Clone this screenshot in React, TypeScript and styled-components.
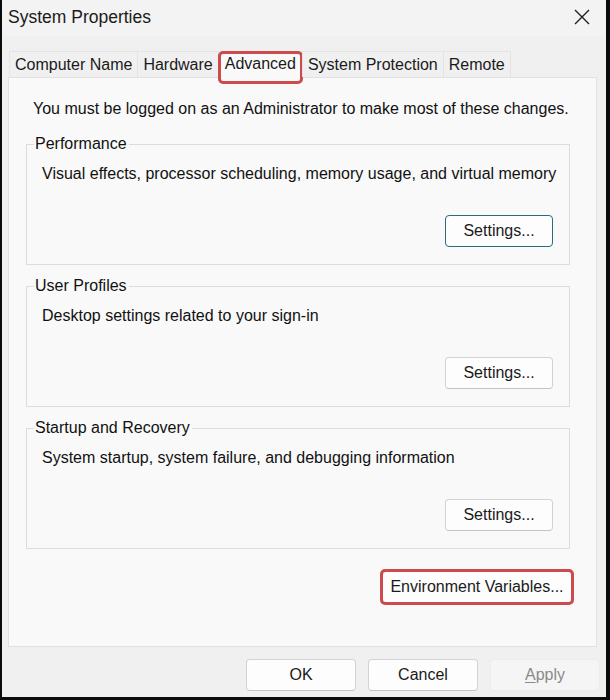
import React from "react";
import styled, { createGlobalStyle } from "styled-components";

const GlobalStyle = createGlobalStyle`
  html, body { margin: 0; padding: 0; background: #0b0b0b; }
  body { font-family: "Liberation Sans", Arial, sans-serif; color: #1a1a1a; }
  * { box-sizing: border-box; }
`;

const Frame = styled.div`
  width: 610px;
  height: 700px;
  padding: 0 4px 3px 2px;
  background: #0b0b0b;
`;

const Window = styled.div`
  width: 100%;
  height: 100%;
  background: #f0f0f0;
  display: flex;
  flex-direction: column;
`;

const TitleBar = styled.div`
  height: 36px;
  display: flex;
  align-items: center;
  justify-content: space-between;
  padding: 0 14px 0 6px;
  background: #f3f3f3;
`;

const Title = styled.div`
  font-size: 17.5px;
  color: #1b1b1b;
  margin-top: -2px;
`;

const CloseButton = styled.div`
  width: 20px;
  height: 20px;
  display: flex;
  align-items: center;
  justify-content: center;
  margin-top: -3px;
`;

const Body = styled.div`
  flex: 1;
  display: flex;
  flex-direction: column;
  padding: 15px 9px 0 6px;
`;

const TabStrip = styled.div`
  display: flex;
  align-items: flex-end;
  height: 26px;
  padding-left: 1px;
  position: relative;
  z-index: 1;
`;

const Tab = styled.div<{ $active?: boolean }>`
  height: 26px;
  display: flex;
  align-items: center;
  padding: 0 ${(p) => (p.$active ? "6px" : "5px")} ${(p) => (p.$active ? "3px" : "0")};
  font-size: 16px;
  color: #1a1a1a;
  background: ${(p) => (p.$active ? "#f9f9f9" : "#f0f0f0")};
  border: 1px solid #e3e3e3;
  border-bottom: ${(p) => (p.$active ? "1px solid #f9f9f9" : "none")};
  margin-right: -1px;
  margin-bottom: ${(p) => (p.$active ? "-1px" : "0")};
  position: relative;
`;

const Highlight = styled.div<{ $inset?: string }>`
  position: absolute;
  inset: ${(p) => p.$inset ?? "-3px"};
  border: 3px solid #cd4a4d;
  border-radius: 5px;
  pointer-events: none;
`;

const Panel = styled.div`
  height: 570px;
  background: #f9f9f9;
  border: 1px solid #e1e1e1;
  display: flex;
  flex-direction: column;
  padding: 21px 24px 0 17px;
`;

const Notice = styled.div`
  font-size: 16px;
  padding-left: 7px;
  line-height: 20px;
  color: #111;
`;

const GroupList = styled.div`
  display: flex;
  flex-direction: column;
  gap: 12px;
  margin-top: 16px;
  margin-right: 2px;
`;

const Group = styled.fieldset`
  margin: 0;
  min-width: 0;
  height: 130px;
  border: 1px solid #dcdcdc;
  border-radius: 0;
  padding: 0 16px 0 15px;
`;

const Legend = styled.legend`
  font-size: 16px;
  padding: 0 2px 0 1px;
  margin-left: -8px;
  line-height: 18px;
  color: #111;
`;

const Description = styled.div`
  font-size: 16px;
  line-height: 20px;
  margin-top: 11px;
  white-space: nowrap;
  color: #111;
`;

const GroupActions = styled.div`
  margin-top: 31px;
  display: flex;
  justify-content: flex-end;
`;

const Button = styled.button<{ $default?: boolean; $disabled?: boolean; $w?: number }>`
  font-family: "Liberation Sans", Arial, sans-serif;
  font-size: 16px;
  width: ${(p) => p.$w ?? 108}px;
  height: 32px;
  background: ${(p) => (p.$disabled ? "#f5f5f5" : "#fdfdfd")};
  color: ${(p) => (p.$disabled ? "#8a8a8a" : "#1a1a1a")};
  border: 1px solid ${(p) => (p.$default ? "#2a6b80" : p.$disabled ? "#ececec" : "#d3d3d3")};
  border-bottom-color: ${(p) => (p.$default ? "#2a6b80" : p.$disabled ? "#ececec" : "#c4c4c4")};
  border-radius: 4px;
  padding: 0;
  display: flex;
  align-items: center;
  justify-content: center;
  position: relative;
`;

const Underline = styled.span`
  text-decoration: underline;
  text-underline-offset: 2px;
`;

const EnvRow = styled.div`
  display: flex;
  justify-content: flex-end;
  margin-top: 22px;
`;

const Footer = styled.div`
  flex: 1;
  display: flex;
  justify-content: flex-end;
  align-items: flex-start;
  gap: 12px;
  padding: 12px 0 0 0;
  margin-right: -3px;
`;

const CloseIcon = () => (
  <svg width="18" height="18" viewBox="0 0 18 18">
    <path d="M2 2 L16 16 M16 2 L2 16" stroke="#1f1f1f" strokeWidth="1.4" fill="none" />
  </svg>
);

const groups = [
  { title: "Performance", text: "Visual effects, processor scheduling, memory usage, and virtual memory", def: true },
  { title: "User Profiles", text: "Desktop settings related to your sign-in" },
  { title: "Startup and Recovery", text: "System startup, system failure, and debugging information" },
];

export default function App() {
  return (
    <>
      <GlobalStyle />
      <Frame>
        <Window>
          <TitleBar>
            <Title>System Properties</Title>
            <CloseButton>
              <CloseIcon />
            </CloseButton>
          </TitleBar>
          <Body>
            <TabStrip>
              <Tab>Computer Name</Tab>
              <Tab>Hardware</Tab>
              <Tab $active>
                Advanced
                <Highlight $inset="-2px -1px -7px -1px" />
              </Tab>
              <Tab>System Protection</Tab>
              <Tab>Remote</Tab>
            </TabStrip>
            <Panel>
              <Notice>You must be logged on as an Administrator to make most of these changes.</Notice>
              <GroupList>
                {groups.map((g) => (
                  <Group key={g.title}>
                    <Legend>{g.title}</Legend>
                    <Description>{g.text}</Description>
                    <GroupActions>
                      <Button $default={g.def}>Settings...</Button>
                    </GroupActions>
                  </Group>
                ))}
              </GroupList>
              <EnvRow>
                <Button $w={190}>
                  Environment Variables...
                  <Highlight />
                </Button>
              </EnvRow>
            </Panel>
            <Footer>
              <Button $w={110}>OK</Button>
              <Button $w={110}>Cancel</Button>
              <Button $w={110} $disabled>
                <span>
                  <Underline>A</Underline>pply
                </span>
              </Button>
            </Footer>
          </Body>
        </Window>
      </Frame>
    </>
  );
}
